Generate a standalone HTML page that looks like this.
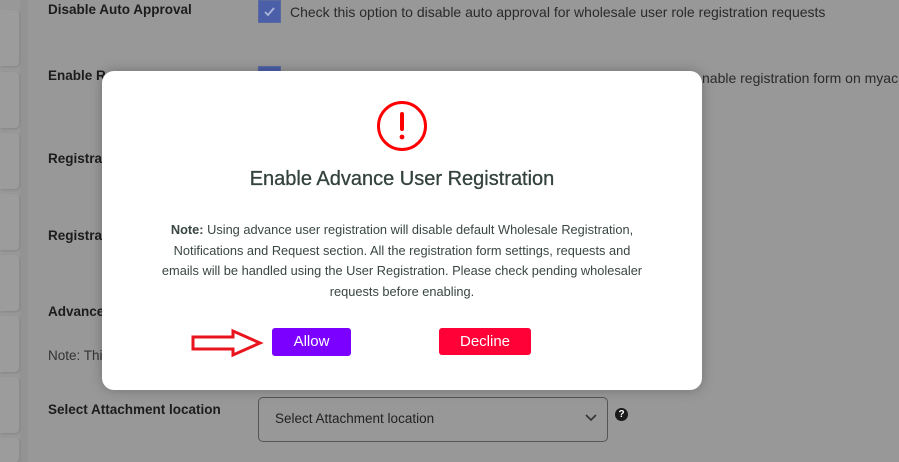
<!DOCTYPE html>
<html><head><style>
*{margin:0;padding:0;box-sizing:border-box}
html,body{width:899px;height:462px;overflow:hidden}
body{background:#989898;font-family:"Liberation Sans",sans-serif;position:relative;color:#1e1e1e}
.a{position:absolute;white-space:nowrap}
.card{position:absolute;left:0;width:19px;height:56px;background:#9c9c9c;border-radius:0 4px 4px 0;box-shadow:1px 1px 2px rgba(0,0,0,.12)}
.lbl{font-size:13.5px;font-weight:bold;color:#1c1c1c}
.cb{position:absolute;width:23px;height:23px;background:#4a5fa8;border:1px solid #5a6aa0}
.txt{font-size:14px;color:#2a2a2a}
</style></head><body>
<div style="position:absolute;left:20px;top:0;width:8px;height:462px;background:#939393"></div>
<div class="card" style="top:10px"></div>
<div class="card" style="top:72px"></div>
<div class="card" style="top:133px"></div>
<div class="card" style="top:194px"></div>
<div class="card" style="top:255px"></div>
<div class="card" style="top:316px"></div>
<div class="card" style="top:377px"></div>
<div class="card" style="top:438px;height:24px"></div>

<div class="a lbl" style="left:48px;top:2px">Disable Auto Approval</div>
<div class="cb" style="left:258px;top:0px"><svg width="21" height="21" viewBox="0 0 21 21"><path d="M6 11l3 3 6-7" stroke="#aab4d8" stroke-width="1.8" fill="none"/></svg></div>
<div class="a txt" style="left:290px;top:4px">Check this option to disable auto approval for wholesale user role registration requests</div>

<div class="a lbl" style="left:48px;top:68px">Enable R</div>
<div class="cb" style="left:258px;top:66px"></div>
<div class="a txt" style="left:702px;top:70px">nable registration form on myac</div>
<div class="a lbl" style="left:48px;top:151px">Registrat</div>
<div class="a lbl" style="left:48px;top:228px">Registrat</div>
<div class="a lbl" style="left:48px;top:304px">Advance</div>
<div class="a" style="left:48px;top:348px;font-size:13.5px;color:#333">Note: Thi</div>
<div class="a lbl" style="left:48px;top:402px">Select Attachment location</div>
<div style="position:absolute;left:258px;top:397px;width:350px;height:45px;border:1px solid #555;border-radius:5px"></div>
<div class="a" style="left:275px;top:411px;font-size:13.5px;color:#222">Select Attachment location</div>
<svg class="a" style="left:585px;top:414px" width="12" height="8" viewBox="0 0 12 8"><path d="M1 1l5 5 5-5" stroke="#333" stroke-width="1.6" fill="none"/></svg>
<div class="a" style="left:615px;top:408px;width:13px;height:13px;border-radius:50%;background:#1a1a1a;color:#fff;font-size:10px;font-weight:bold;text-align:center;line-height:13px">?</div>

<div style="position:absolute;left:102px;top:71px;width:600px;height:319px;background:#fff;border-radius:12px;box-shadow:0 0 12px rgba(0,0,0,.25)">
<svg class="a" style="left:275px;top:30px" width="50" height="50" viewBox="0 0 50 50"><circle cx="25" cy="25" r="23.5" fill="none" stroke="#f00" stroke-width="3"/><rect x="23" y="11" width="4" height="19" rx="2" fill="#f00"/><circle cx="25" cy="36" r="2.4" fill="#f00"/></svg>
<div class="a" style="left:0;width:600px;top:97px;text-align:center;font-size:20px;color:#34423c;-webkit-text-stroke:0.3px #34423c">Enable Advance User Registration</div>
<div class="a" style="left:0;width:600px;top:149px;text-align:center;font-size:12.8px;line-height:20.5px;color:#3a4741;white-space:normal;padding:0 30px"><b>Note:</b> Using advance user registration will disable default Wholesale Registration,<br>Notifications and Request section. All the registration form settings, requests and<br>emails will be handled using the User Registration. Please check pending wholesaler<br>requests before enabling.</div>
<div class="a" style="left:170px;top:257px;width:79px;height:28px;background:#7b00ff;border-radius:3px;color:#fff;font-size:15px;text-align:center;line-height:28px">Allow</div>
<div class="a" style="left:337px;top:257px;width:92px;height:27px;background:#ff0037;border-radius:3px;color:#fff;font-size:15px;text-align:center;line-height:27px">Decline</div>
<svg class="a" style="left:88px;top:257px" width="84" height="30" viewBox="0 0 84 30"><path d="M3 9H43V3L70 15 43 27V21H3Z" fill="none" stroke="#e8141e" stroke-width="3"/></svg>
</div>
</body></html>
